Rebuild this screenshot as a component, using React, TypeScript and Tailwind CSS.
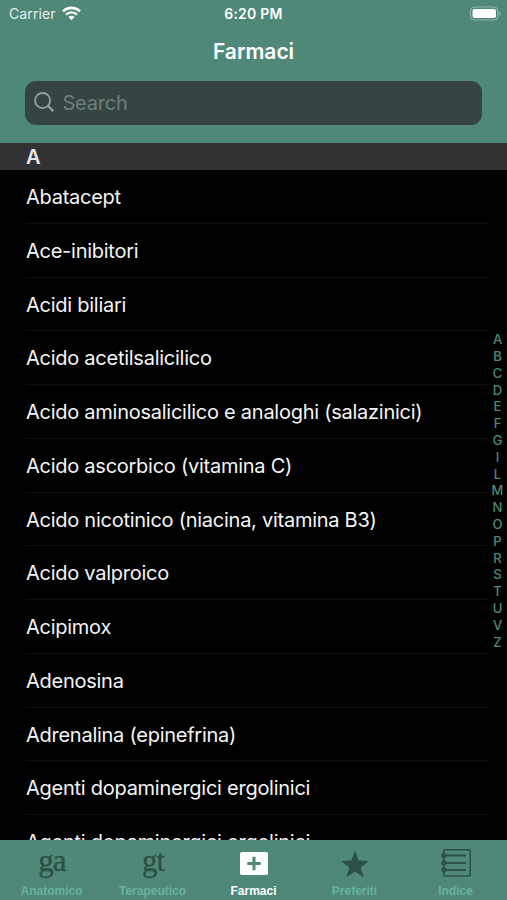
import React, { useState } from "react";

const drugs = [
  "Abatacept",
  "Ace-inibitori",
  "Acidi biliari",
  "Acido acetilsalicilico",
  "Acido aminosalicilico e analoghi (salazinici)",
  "Acido ascorbico (vitamina C)",
  "Acido nicotinico (niacina, vitamina B3)",
  "Acido valproico",
  "Acipimox",
  "Adenosina",
  "Adrenalina (epinefrina)",
  "Agenti dopaminergici ergolinici",
  "Agenti dopaminergici ergolinici",
];

const letters = "ABCDEFGILMNOPRSTUVZ".split("");

const WifiIcon = () => (
  <svg className="h-[15px] w-[19px]" viewBox="0 0 19 15" fill="none">
    <path d="M1 5.4a12 12 0 0 1 17 0" stroke="white" strokeWidth="2.6" />
    <path d="M4 8.6a7.8 7.8 0 0 1 11 0" stroke="white" strokeWidth="2.4" />
    <path d="M6.4 11a4.4 4.4 0 0 1 6.2 0L9.5 14.2z" fill="white" />
  </svg>
);

const BatteryIcon = () => (
  <svg className="h-[15px] w-[32px]" viewBox="0 0 32 15" fill="none">
    <rect x="1.5" y="1" width="27.5" height="13" rx="4" stroke="white" strokeOpacity="0.4" />
    <rect x="3.5" y="3" width="23.5" height="9" rx="2" fill="white" />
    <path d="M30.3 5.3c1.6.7 1.6 3.7 0 4.4z" fill="white" fillOpacity="0.45" />
  </svg>
);

const SearchIcon = () => (
  <svg className="h-[21px] w-[21px]" viewBox="0 0 21 21" fill="none" stroke="#94a29f" strokeWidth="1.8">
    <circle cx="8.6" cy="8.5" r="7.5" />
    <path d="m14 13.8 5.4 5.4" strokeWidth="2.3" />
  </svg>
);

const PlusIcon = () => (
  <svg className="mt-[2px] h-[24px] w-[28px]" viewBox="0 0 28 24">
    <rect width="28" height="23" rx="1.8" fill="white" />
    <path d="M14 4.8v13.4M7.3 11.5h13.4" stroke="#4f8878" strokeWidth="3" />
  </svg>
);

const StarIcon = () => (
  <svg className="h-[28px] w-[30px]" viewBox="0 0 30 28" fill="#2b5146">
    <path d="M15 .5 18.6 10.6 29 11l-8.4 6.6 3.2 10L15 21.6l-8.8 6 3.2-10L1 11l10.4-.4z" />
  </svg>
);

const ListIcon = () => (
  <svg className="mt-[-1px] h-[28px] w-[30px]" viewBox="0 0 30 28" fill="none" stroke="#2b5146">
    <rect x="2.7" y=".8" width="26.5" height="26.2" rx="1" strokeWidth="1.5" />
    <path d="M3 6.5h22M3 14h22M3 21h22" strokeWidth="2" />
    <g fill="#2b5146" stroke="none">
      <circle cx="3" cy="6.5" r="2.7" />
      <circle cx="3" cy="14" r="2.7" />
      <circle cx="3" cy="21" r="2.7" />
    </g>
  </svg>
);

const Monogram = ({ children }: { children: string }) => (
  <span className="h-[30px] pl-[1px] font-['Liberation_Serif',serif] text-[31px] leading-[21px] font-normal tracking-[-1px] text-[#2b5146] [-webkit-text-stroke:0.4px_#2b5146]">
    {children}
  </span>
);

const tabs = [
  { name: "Anatomico", icon: <Monogram>ga</Monogram> },
  { name: "Terapeutico", icon: <Monogram>gt</Monogram> },
  { name: "Farmaci", icon: <PlusIcon /> },
  { name: "Preferiti", icon: <StarIcon /> },
  { name: "Indice", icon: <ListIcon /> },
];

const App: React.FC = () => {
  const [activeTab, setActiveTab] = useState("Farmaci");

  return (
    <div className="flex h-[900px] w-[507px] flex-col overflow-hidden bg-black font-['Inter','Liberation_Sans',sans-serif] text-white">
      <header className="h-[142.5px] shrink-0 bg-[#4f8878]">
        <div className="grid h-[26px] grid-cols-3 items-center pr-[6px] pl-[9px] text-[14px]">
          <div className="flex items-center gap-[6px] text-[#e3efeb]">
            <span className="tracking-[0.1px]">Carrier</span>
            <WifiIcon />
          </div>
          <span className="pr-[3px] text-center font-semibold tracking-[0.25px]">6:20 PM</span>
          <div className="flex justify-end">
            <BatteryIcon />
          </div>
        </div>
        <h1 className="h-[54.6px] text-center text-[21px] leading-[52px] font-semibold">
          Farmaci
        </h1>
        <label className="mx-[25.4px] flex h-[44px] items-center gap-[7px] rounded-[11px] bg-[#364543] pl-[9px]">
          <SearchIcon />
          <input
            type="text"
            placeholder="Search"
            className="min-w-0 flex-1 bg-transparent text-[20px] tracking-[-0.2px] outline-none placeholder:text-[#6d7d79]"
          />
        </label>
      </header>

      <main className="flex min-h-0 flex-1">
        <section className="min-w-0 flex-1">
          <h2 className="h-[27px] bg-[#323234] pl-[26px] text-[20px] leading-[29px] font-semibold text-[#e6e6e8]">
            A
          </h2>
          <ul className="h-[670.5px] overflow-hidden pt-[0.6px] pl-[26px]">
            {drugs.map((drug, index) => (
              <li
                key={index}
                className="h-[53.75px] border-b border-[#0f0f0f] text-[20px] leading-[55px] tracking-[-0.26px] whitespace-nowrap text-[#f5f5f5]"
              >
                {drug}
              </li>
            ))}
          </ul>
        </section>
        <nav className="flex w-[19px] shrink-0 flex-col">
          <div className="h-[27px] shrink-0 bg-[#323234]" />
          <div className="flex flex-1 flex-col items-center pt-[161.7px] text-[13px] font-medium text-[#4f8878]">
            {letters.map((letter) => (
              <span key={letter} className="h-[16.8px] leading-[17px]">
                {letter}
              </span>
            ))}
          </div>
        </nav>
      </main>

      <footer className="flex h-[60px] shrink-0 bg-[#4f8878] px-[1px] font-['Liberation_Sans',sans-serif]">
        {tabs.map(({ name, icon }) => (
          <button
            key={name}
            onClick={() => setActiveTab(name)}
            className={`flex flex-1 flex-col items-center text-[12px] font-bold ${
              activeTab === name ? "text-white" : "text-[#66b29c]"
            }`}
          >
            <span className="flex h-[43px] items-start pt-[10px]">{icon}</span>
            <span className="leading-[16px]">{name}</span>
          </button>
        ))}
      </footer>
    </div>
  );
};

export default App;
